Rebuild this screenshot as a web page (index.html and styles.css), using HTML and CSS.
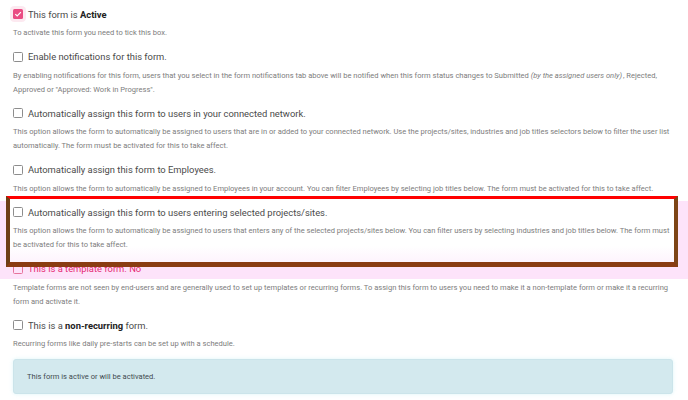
FILE: index.html
```html
<!DOCTYPE html>
<html>
<head>
<meta charset="utf-8">
<link rel="stylesheet" href="styles.css">
</head>
<body>
<div class="page">
  <div class="band"></div>
  <div class="annotation-fill"></div>
  <div class="item">
    <label class="check-row"><span class="box checked"><svg viewBox="0 0 10 10" width="10" height="10"><path d="M2.3 5.1 L4.2 7 L7.9 3.1" fill="none" stroke="#fff" stroke-width="1.2"/></svg></span><span class="label">This form is <b>Active</b></span></label>
    <p class="desc">To activate this form you need to tick this box.</p>
  </div>
  <div class="item">
    <label class="check-row"><span class="box"></span><span class="label">Enable notifications for this form.</span></label>
    <p class="desc">By enabling notifications for this form, users that you select in the form notifications tab above will be notified when this form status changes to Submitted <i class="note">(by the assigned users only)</i>, Rejected, Approved or "Approved: Work in Progress".</p>
  </div>
  <div class="item">
    <label class="check-row"><span class="box"></span><span class="label">Automatically assign this form to users in your connected network.</span></label>
    <p class="desc">This option allows the form to automatically be assigned to users that are in or added to your connected network. Use the projects/sites, industries and job titles selectors below to filter the user list automatically. The form must be activated for this to take affect.</p>
  </div>
  <div class="item">
    <label class="check-row"><span class="box"></span><span class="label">Automatically assign this form to Employees.</span></label>
    <p class="desc">This option allows the form to automatically be assigned to Employees in your account. You can filter Employees by selecting job titles below. The form must be activated for this to take affect.</p>
  </div>
  <div class="item">
    <label class="check-row"><span class="box"></span><span class="label">Automatically assign this form to users entering selected projects/sites.</span></label>
    <p class="desc">This option allows the form to automatically be assigned to users that enters any of the selected projects/sites below. You can filter users by selecting industries and job titles below. The form must be activated for this to take affect.</p>
  </div>
  <div class="item">
    <label class="check-row template"><span class="box"></span><span class="label">This is a template form. No</span></label>
    <p class="desc">Template forms are not seen by end-users and are generally used to set up templates or recurring forms. To assign this form to users you need to make it a non-template form or make it a recurring form and activate it.</p>
  </div>
  <div class="item">
    <label class="check-row"><span class="box"></span><span class="label">This is a <b>non-recurring</b> form.</span></label>
    <p class="desc">Recurring forms like daily pre-starts can be set up with a schedule.</p>
  </div>
  <div class="alert">This form is active or will be activated.</div>
  <div class="annotation"></div>
</div>
</body>
</html>
```
FILE: styles.css
```css
html, body {
  margin: 0;
  padding: 0;
  background: #fff;
}
body {
  width: 688px;
  height: 400px;
  overflow: hidden;
  font-family: Roboto, "Liberation Sans", sans-serif;
}
.page {
  position: relative;
  z-index: 0;
  padding: 4px 12px 0 13px;
}
.item {
  margin-bottom: 6.5px;
}
.check-row {
  display: flex;
  align-items: center;
  gap: 5px;
  height: 20px;
  font-size: 9.4px;
  color: #4a4a4a;
}
.check-row b {
  color: #222;
  font-weight: 700;
}
.box {
  width: 8px;
  height: 8px;
  border: 1px solid #8d8d8d;
  border-radius: 1.5px;
  background: #fff;
  flex: none;
  display: flex;
}
.box.checked {
  width: 10px;
  height: 10px;
  border: none;
  background: #ea4c83;
  box-shadow: 0 0 0 3px rgba(234, 76, 131, 0.12);
}
.desc {
  margin: 2px 0 0;
  font-size: 7.55px;
  line-height: 14px;
  color: #7d7d7d;
}
.note {
  padding-right: 1px;
}
.template {
  color: #e62c74;
}
.template .box {
  border-color: #e6739c;
  background: transparent;
}
.alert {
  margin-top: 7.5px;
  height: 35px;
  width: 660px;
  box-sizing: border-box;
  display: flex;
  align-items: center;
  padding: 0 13px;
  background: #d3e9ee;
  border: 1px solid #cbe4ea;
  border-radius: 3px;
  box-shadow: 0 0 4px rgba(200, 240, 245, 0.6);
  font-size: 7.55px;
  color: #3f4a4e;
}
.band {
  position: absolute;
  left: 0;
  right: 0;
  top: 201px;
  height: 78px;
  background: #fde3fa;
  z-index: -2;
}
.annotation-fill {
  position: absolute;
  left: 6px;
  top: 196px;
  width: 672px;
  height: 71px;
  background: linear-gradient(#ffffff 0%, #ffffff 70%, #fdf0fc 100%);
  z-index: -1;
}
.annotation {
  position: absolute;
  left: 6px;
  top: 196px;
  width: 672px;
  height: 71px;
  box-sizing: border-box;
  border-style: solid;
  border-width: 3px 4px 5px 4px;
  border-color: #ff0000 #7d4416 #8a3c12 #6e3e16;
}
```
